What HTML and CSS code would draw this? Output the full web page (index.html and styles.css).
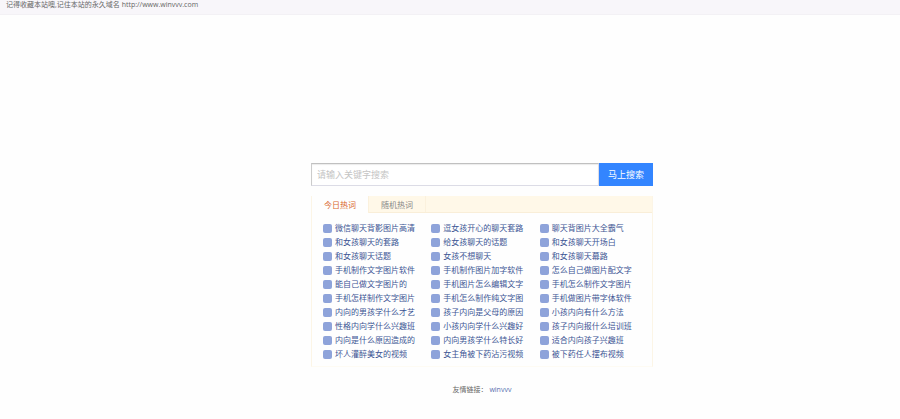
FILE: index.html
```html
<!DOCTYPE html>
<html lang="zh-CN">

<head>
  <meta charset="utf-8">
  <meta name="viewport" content="width=device-width, initial-scale=1">
  <title>winvvv</title>
  <link rel="stylesheet" href="styles.css">
</head>

<body>

  <header class="notice">记得收藏本站噢,记住本站的永久域名 http://www.winvvv.com</header>

  <main class="main">

    <form class="search">
      <input class="search-input" type="text" placeholder="请输入关键字搜索" aria-label="请输入关键字搜索">
      <button class="search-submit" type="submit">马上搜索</button>
    </form>

    <section class="hot">
      <div class="tabs">
        <button class="tab active" type="button">今日热词</button>
        <button class="tab" type="button">随机热词</button>
      </div>
      <ul class="words">
        <li><a href="#">微信聊天背影图片高清</a></li>
        <li><a href="#">逗女孩开心的聊天套路</a></li>
        <li><a href="#">聊天背图片大全霸气</a></li>
        <li><a href="#">和女孩聊天的套路</a></li>
        <li><a href="#">给女孩聊天的话题</a></li>
        <li><a href="#">和女孩聊天开场白</a></li>
        <li><a href="#">和女孩聊天话题</a></li>
        <li><a href="#">女孩不想聊天</a></li>
        <li><a href="#">和女孩聊天幕路</a></li>
        <li><a href="#">手机制作文字图片软件</a></li>
        <li><a href="#">手机制作图片加字软件</a></li>
        <li><a href="#">怎么自己做图片配文字</a></li>
        <li><a href="#">能自己做文字图片的</a></li>
        <li><a href="#">手机图片怎么编辑文字</a></li>
        <li><a href="#">手机怎么制作文字图片</a></li>
        <li><a href="#">手机怎样制作文字图片</a></li>
        <li><a href="#">手机怎么制作纯文字图</a></li>
        <li><a href="#">手机做图片带字体软件</a></li>
        <li><a href="#">内向的男孩学什么才艺</a></li>
        <li><a href="#">孩子内向是父母的原因</a></li>
        <li><a href="#">小孩内向有什么方法</a></li>
        <li><a href="#">性格内向学什么兴趣班</a></li>
        <li><a href="#">小孩内向学什么兴趣好</a></li>
        <li><a href="#">孩子内向报什么培训班</a></li>
        <li><a href="#">内向是什么原因造成的</a></li>
        <li><a href="#">内向男孩学什么特长好</a></li>
        <li><a href="#">适合内向孩子兴趣班</a></li>
        <li><a href="#">坏人灌醉美女的视频</a></li>
        <li><a href="#">女主角被下药沾污视频</a></li>
        <li><a href="#">被下药任人摆布视频</a></li>
      </ul>
    </section>

    <footer class="links">友情链接： <a href="#">winvvv</a></footer>

  </main>

</body>

</html>
```
FILE: styles.css
```css
/* ******************** global ******************* */

* {
  box-sizing: border-box;
}

body {
  margin: 0;
  background-color: #fefefe;
  color: #666;
  font-family: "Open Sans", "Noto Sans CJK SC", sans-serif;
  font-size: 8px;
}

a {
  color: #3c5594;
  text-decoration: none;
}

a:hover {
  text-decoration: underline;
}

input,
button {
  margin: 0;
  border: none;
  border-radius: 0;
  outline: none;
  font-family: inherit;
}

button {
  cursor: pointer;
}

/* ******************** layout ******************* */

.notice {
  height: 15px;
  padding-left: 6px;
  background-color: #f8f6fa;
  border-bottom: 1px solid #f3f1f5;
  font-size: 7px;
  line-height: 9px;
}

.main {
  display: flex;
  flex-direction: column;
  align-items: center;
  padding: 148px 0 24px 64px;
}

/* ******************** search ******************* */

.search {
  display: flex;
  width: 342px;
  max-width: 100%;
  height: 23px;
}

.search-input {
  flex: 1;
  min-width: 0;
  padding: 0 5px;
  background-color: white;
  border: 1px solid #dcdce6;
  border-top-color: #c0c0c0;
  border-left-color: #ccc;
  box-shadow: inset 0 1px 1px #ececec;
  font-size: 9px;
}

.search-input::placeholder {
  color: #c4c4c4;
}

.search-submit {
  width: 54px;
  padding: 0;
  background-color: #3385ff;
  color: white;
  font-size: 9px;
}

/* ******************** hot words ******************* */

.hot {
  width: 342px;
  max-width: 100%;
  margin-top: 10px;
  border: 1px solid #fcf5e6;
  border-top: none;
  border-bottom-color: #fefbf3;
}

.tabs {
  display: flex;
  height: 17px;
  background-color: #fff8e8;
  border-bottom: 1px solid #f9eed8;
}

.tab {
  width: 57px;
  padding: 0;
  background-color: transparent;
  border-right: 1px solid #fbf1dd;
  color: #888;
  font-size: 8px;
}

.tab.active {
  height: 17px;
  background-color: #fefefe;
  color: #d9682f;
}

.words {
  display: grid;
  grid-template-columns: repeat(3, 1fr);
  margin: 0;
  padding: 8px 4px 5px 11px;
  list-style: none;
}

.words a {
  display: flex;
  align-items: center;
  gap: 3px;
  line-height: 14px;
  white-space: nowrap;
}

.words a::before {
  content: "";
  width: 9px;
  height: 9px;
  background-color: #8ea3da;
  border-radius: 2px;
}

/* ******************** footer ******************* */

.links {
  margin-top: 17px;
  font-size: 7px;
  line-height: 12px;
}

.links a {
  color: #5a70b0;
}
```
